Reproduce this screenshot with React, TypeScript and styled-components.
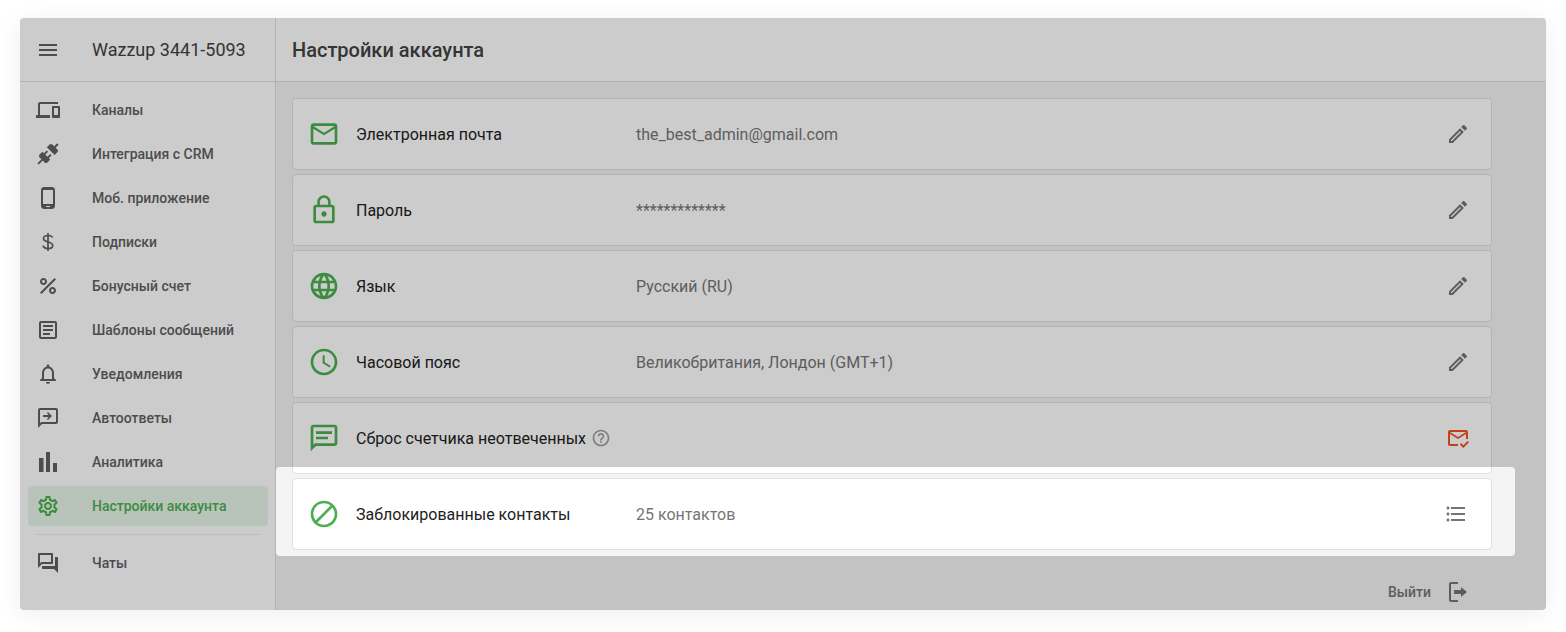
import React from 'react';
import styled, { createGlobalStyle } from 'styled-components';
import {
  MdMenu,
  MdOutlineDevices,
  MdOutlinePhoneAndroid,
  MdOutlineArticle,
  MdOutlineSettings,
  MdMailOutline,
  MdLockOutline,
  MdLanguage,
  MdAccessTime,
  MdBlock,
  MdOutlineEdit,
  MdHelpOutline,
  MdFormatListBulleted,
  MdOutlineMarkEmailRead,
  MdOutlineForum,
  MdNotificationsNone,
} from 'react-icons/md';

const GREEN = '#4caf50';

const Global = createGlobalStyle`
  html, body { margin: 0; padding: 0; background: #fff; }
  body { font-family: Roboto, "Noto Sans", sans-serif; }
  * { box-sizing: border-box; }
`;

const Page = styled.div`
  padding: 18px 20px 22px;
`;

const Card = styled.div`
  position: relative;
  display: flex;
  height: 592px;
  border-radius: 4px;
  overflow: hidden;
  background: #fff;
`;

const CardShadow = styled.div`
  border-radius: 4px;
  box-shadow: 0 4px 24px rgba(0, 0, 0, 0.07);
`;

const Spotlight = styled.div`
  position: absolute;
  left: 256px;
  top: 449px;
  width: 1239px;
  height: 89px;
  border-radius: 4px;
  box-shadow: 0 0 0 2000px rgba(0, 0, 0, 0.2);
  pointer-events: none;
`;

const Sidebar = styled.aside`
  flex: 0 0 256px;
  border-right: 1px solid #e0e0e0;
  background: #fff;
`;

const Head = styled.div`
  display: flex;
  align-items: center;
  height: 64px;
  border-bottom: 1px solid #e0e0e0;
`;

const SideHead = styled(Head)`
  gap: 32px;
  padding-left: 16px;
  color: #616161;
`;

const Brand = styled.div`
  font-size: 18px;
  color: #424242;
`;

const Nav = styled.nav`
  display: flex;
  flex-direction: column;
  gap: 4px;
  padding: 8px 7px 0 8px;
`;

const NavItem = styled.div<{ $active?: boolean }>`
  display: flex;
  align-items: center;
  gap: 32px;
  height: 40px;
  padding-left: 8px;
  border-radius: 4px;
  font-size: 14px;
  font-weight: 500;
  color: ${(p) => (p.$active ? GREEN : '#616161')};
  background: ${(p) => (p.$active ? '#e7f5e8' : 'transparent')};
`;

const NavDivider = styled.div`
  height: 1px;
  margin: 4px 8px;
  background: #eeeeee;
`;

const Main = styled.main`
  flex: 1;
  min-width: 0;
  background: #f4f4f4;
`;

const MainHead = styled(Head)`
  padding-left: 16px;
  background: #fff;
`;

const Title = styled.h1`
  margin: 0;
  font-size: 20px;
  font-weight: 500;
  color: #424242;
`;

const List = styled.div`
  display: flex;
  flex-direction: column;
  gap: 4px;
  width: 1200px;
  margin: 16px 0 0 16px;
`;

const Row = styled.div`
  display: flex;
  align-items: center;
  height: 72px;
  padding: 0 21px 0 15px;
  border: 1px solid #e0e0e0;
  border-radius: 4px;
  background: #fff;
`;

const RowIcon = styled.div`
  display: flex;
  flex: 0 0 32px;
  margin-right: 16px;
  color: ${GREEN};
`;

const Label = styled.div`
  display: flex;
  align-items: center;
  gap: 5px;
  flex: 0 0 280px;
  font-size: 16px;
  color: #212121;
`;

const Value = styled.div`
  flex: 1;
  font-size: 16px;
  color: #757575;
`;

const Action = styled.div<{ $tone?: string; $shift?: number }>`
  display: flex;
  margin-right: ${(p) => p.$shift ?? 0}px;
  color: ${(p) => p.$tone ?? '#757575'};
`;

const Help = styled.span`
  display: flex;
  color: #9e9e9e;
`;

const Logout = styled.div`
  display: flex;
  align-items: center;
  justify-content: flex-end;
  gap: 15px;
  width: 1200px;
  margin: 30px 0 0 16px;
  padding-right: 22px;
  font-size: 14px;
  font-weight: 500;
  color: #757575;
`;

function Glyph({ d, size = 24 }: { d: string; size?: number }) {
  return (
    <svg width={size} height={size} viewBox="0 0 24 24" fill="currentColor">
      <path d={d} />
    </svg>
  );
}

const PLUG =
  'M21.4 7.5C22.2 8.3 22.2 9.6 21.4 10.3L18.6 13.1L10.8 5.3L13.6 2.5C14.4 1.7 15.7 1.7 16.4 2.5L18.2 4.3L21.2 1.3L22.6 2.7L19.6 5.7L21.4 7.5M15.6 13.3L14.2 11.9L11.4 14.7L9.3 12.6L12.1 9.8L10.7 8.4L7.9 11.2L6.4 9.8L3.6 12.6C2.8 13.4 2.8 14.7 3.6 15.4L5.4 17.2L1.4 21.2L2.8 22.6L6.8 18.6L8.6 20.4C9.4 21.2 10.7 21.2 11.4 20.4L14.2 17.6L12.8 16.2L15.6 13.3Z';
const PERCENT =
  'M7.5 11C9.43 11 11 9.43 11 7.5S9.43 4 7.5 4 4 5.57 4 7.5 5.57 11 7.5 11zm0-5C8.33 6 9 6.67 9 7.5S8.33 9 7.5 9 6 8.33 6 7.5 6.67 6 7.5 6zM4.05 18.54 18.54 4.05l1.41 1.41L5.46 19.95zM16.5 13c-1.93 0-3.5 1.57-3.5 3.5s1.57 3.5 3.5 3.5 3.5-1.57 3.5-3.5-1.57-3.5-3.5-3.5zm0 5c-.83 0-1.5-.67-1.5-1.5s.67-1.5 1.5-1.5 1.5.67 1.5 1.5-.67 1.5-1.5 1.5z';
const AUTOREPLY =
  'M20 2H4c-1.1 0-2 .9-2 2v18l4-4h14c1.1 0 2-.9 2-2V4c0-1.1-.9-2-2-2zm0 14H5.17L4 17.17V4h16v12zM12 6l-1.1 1.1L12.8 9H7v2h5.8l-1.9 1.9L12 14l4-4z';
const BARS = 'M3 8h4.5v14H3zM10 2h4v20h-4zM17 13h4v9h-4z';
const MESSAGE =
  'M20 2H4c-1.1 0-2 .9-2 2v18l4-4h14c1.1 0 2-.9 2-2V4c0-1.1-.9-2-2-2zm0 14H5.17L4 17.17V4h16v12zM6 7h12v2H6zm0 4h9v2H6z';
const EXIT =
  'M5 2h7v2H5v16h7v2H5c-1.1 0-2-.9-2-2V4c0-1.1.9-2 2-2zM8 10h7V7l6 5-6 5v-3H8z';

function DollarIcon() {
  return (
    <svg width={24} height={24} viewBox="0 0 24 24" fill="none" stroke="currentColor" strokeWidth={1.7}>
      <path d="M12 3v18M16.5 7.5C16 6 14.6 5.5 12 5.5c-2.700 0-4.500 1-4.500 3.100 0 4.600 9.200 2.300 9.200 6.800 0 2.100-1.900 3.100-4.700 3.100-2.900 0-4.500-1.100-4.800-3" />
    </svg>
  );
}

const navItems = [
  { title: 'Каналы', icon: <MdOutlineDevices size={24} /> },
  { title: 'Интеграция с CRM', icon: <Glyph d={PLUG} /> },
  { title: 'Моб. приложение', icon: <MdOutlinePhoneAndroid size={24} /> },
  { title: 'Подписки', icon: <DollarIcon /> },
  { title: 'Бонусный счет', icon: <Glyph d={PERCENT} /> },
  { title: 'Шаблоны сообщений', icon: <MdOutlineArticle size={24} /> },
  { title: 'Уведомления', icon: <MdNotificationsNone size={24} /> },
  { title: 'Автоответы', icon: <Glyph d={AUTOREPLY} /> },
  { title: 'Аналитика', icon: <Glyph d={BARS} /> },
  { title: 'Настройки аккаунта', icon: <MdOutlineSettings size={24} />, active: true },
];

const edit = (
  <Action>
    <MdOutlineEdit size={24} />
  </Action>
);

const rows = [
  { icon: <MdMailOutline size={32} />, label: 'Электронная почта', value: 'the_best_admin@gmail.com', action: edit },
  { icon: <MdLockOutline size={32} />, label: 'Пароль', value: '*************', action: edit },
  { icon: <MdLanguage size={32} />, label: 'Язык', value: 'Русский (RU)', action: edit },
  { icon: <MdAccessTime size={32} />, label: 'Часовой пояс', value: 'Великобритания, Лондон (GMT+1)', action: edit },
  {
    icon: <Glyph d={MESSAGE} size={32} />,
    label: 'Сброс счетчика неотвеченных',
    help: true,
    action: (
      <Action $tone="#f4511e">
        <MdOutlineMarkEmailRead size={24} />
      </Action>
    ),
  },
  {
    icon: <MdBlock size={32} />,
    label: 'Заблокированные контакты',
    value: '25 контактов',
    action: (
      <Action $shift={2}>
        <MdFormatListBulleted size={24} />
      </Action>
    ),
  },
];

export default function App() {
  return (
    <Page>
      <Global />
      <CardShadow>
        <Card>
          <Sidebar>
            <SideHead>
              <MdMenu size={24} />
              <Brand>Wazzup 3441-5093</Brand>
            </SideHead>
            <Nav>
              {navItems.map((item) => (
                <NavItem key={item.title} $active={item.active}>
                  {item.icon}
                  {item.title}
                </NavItem>
              ))}
              <NavDivider />
              <NavItem>
                <MdOutlineForum size={24} />
                Чаты
              </NavItem>
            </Nav>
          </Sidebar>
          <Main>
            <MainHead>
              <Title>Настройки аккаунта</Title>
            </MainHead>
            <List>
              {rows.map((row) => (
                <Row key={row.label}>
                  <RowIcon>{row.icon}</RowIcon>
                  <Label>
                    {row.label}
                    {row.help && (
                      <Help>
                        <MdHelpOutline size={20} />
                      </Help>
                    )}
                  </Label>
                  <Value>{row.value}</Value>
                  {row.action}
                </Row>
              ))}
            </List>
            <Logout>
              Выйти
              <Glyph d={EXIT} />
            </Logout>
          </Main>
          <Spotlight />
        </Card>
      </CardShadow>
    </Page>
  );
}
